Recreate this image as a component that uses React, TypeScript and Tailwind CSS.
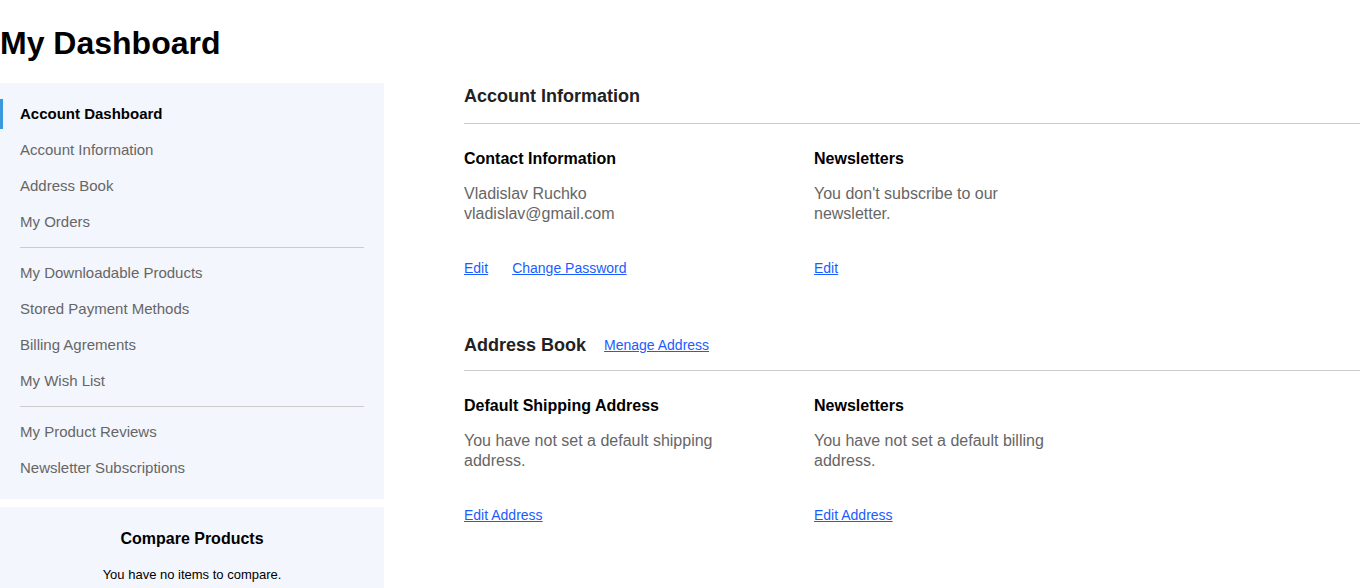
import React from "react";

const navGroups: string[][] = [
  ["Account Dashboard", "Account Information", "Address Book", "My Orders"],
  ["My Downloadable Products", "Stored Payment Methods", "Billing Agrements", "My Wish List"],
  ["My Product Reviews", "Newsletter Subscriptions"],
];

const linkCls = "text-[14px] leading-[16px] text-[#1a5cff] underline";

const Block: React.FC<{ title: string; lines: string[]; links: string[] }> = ({ title, lines, links }) => (
  <div className="w-[350px] flex flex-col">
    <h3 className="text-[16px] leading-[20px] font-bold text-black">{title}</h3>
    <div className="mt-[15px] w-[250px] text-[16px] leading-[20px] text-[#666]">
      {lines.map((l) => (
        <p key={l}>{l}</p>
      ))}
    </div>
    <div className="mt-[36px] flex gap-6">
      {links.map((l) => (
        <a key={l} href="#" className={linkCls}>
          {l}
        </a>
      ))}
    </div>
  </div>
);

export default function App() {
  return (
    <div className="min-h-screen bg-white font-['Liberation_Sans',Arial,sans-serif] text-black">
      <h1 className="pt-[24px] text-[32px] leading-[38px] font-bold">My Dashboard</h1>
      <div className="mt-[21px] flex">
        {/* sidebar */}
        <aside className="w-[384px] shrink-0">
          <nav className="bg-[#f3f6fd] pt-[16px] pb-[10px]">
            {navGroups.map((group, gi) => (
              <div key={gi}>
                {gi > 0 && <div className="mx-[20px] mt-[10px] mb-[10px] border-t border-[#ccc]" />}
                {group.map((item) => {
                  const active = item === "Account Dashboard";
                  return (
                    <div
                      key={item}
                      className={
                        active
                          ? "h-[30px] mb-[6px] flex items-center pl-[17px] border-l-[3px] border-[#3a99dc] text-[15px] font-bold text-black"
                          : "h-[30px] mb-[6px] flex items-center pl-[20px] text-[15px] text-[#666]"
                      }
                    >
                      {item}
                    </div>
                  );
                })}
              </div>
            ))}
          </nav>
          <div className="mt-[8px] bg-[#f3f6fd] pt-[22px] pb-[20px] text-center">
            <h3 className="text-[16px] leading-[20px] font-bold">Compare Products</h3>
            <p className="mt-[18px] text-[13px] leading-[15px]">You have no items to compare.</p>
          </div>
        </aside>

        {/* main */}
        <main className="flex-1 pl-[80px]">
          <section className="pt-[3px]">
            <div className="flex items-center h-[20px]">
              <h2 className="text-[18px] leading-[20px] font-bold text-[#222]">Account Information</h2>
            </div>
            <div className="mt-[17px] border-t border-[#ccc]" />
            <div className="mt-[25px] flex">
              <Block
                title="Contact Information"
                lines={["Vladislav Ruchko", "vladislav@gmail.com"]}
                links={["Edit", "Change Password"]}
              />
              <Block title="Newsletters" lines={["You don't subscribe to our newsletter."]} links={["Edit"]} />
            </div>
          </section>

          <section className="mt-[59px]">
            <div className="flex items-center h-[20px] gap-[18px]">
              <h2 className="text-[18px] leading-[20px] font-bold text-[#222]">Address Book</h2>
              <a href="#" className={linkCls}>
                Menage Address
              </a>
            </div>
            <div className="mt-[15px] border-t border-[#ccc]" />
            <div className="mt-[25px] flex">
              <Block
                title="Default Shipping Address"
                lines={["You have not set a default shipping address."]}
                links={["Edit Address"]}
              />
              <Block
                title="Newsletters"
                lines={["You have not set a default billing address."]}
                links={["Edit Address"]}
              />
            </div>
          </section>
        </main>
      </div>
    </div>
  );
}
